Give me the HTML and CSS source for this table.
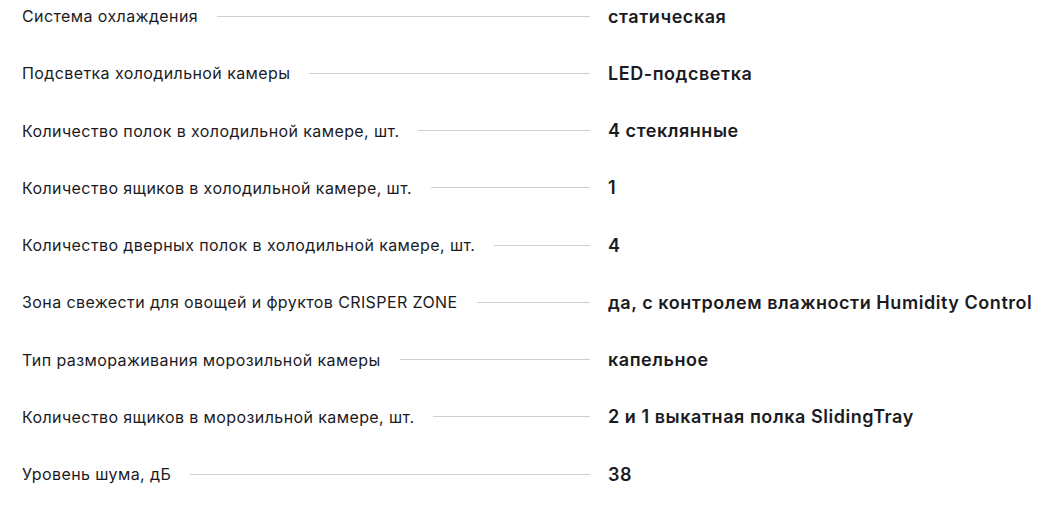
FILE: index.html
```html
<!DOCTYPE html>
<html lang="ru">
<head>
<meta charset="utf-8">
<link rel="stylesheet" href="styles.css">
</head>
<body>
<div class="specs">
  <div class="row"><div class="name"><span class="label">Система охлаждения</span><span class="line"></span></div><div class="value">статическая</div></div>
  <div class="row"><div class="name"><span class="label">Подсветка холодильной камеры</span><span class="line"></span></div><div class="value">LED-подсветка</div></div>
  <div class="row"><div class="name"><span class="label">Количество полок в холодильной камере, шт.</span><span class="line"></span></div><div class="value">4 стеклянные</div></div>
  <div class="row"><div class="name"><span class="label">Количество ящиков в холодильной камере, шт.</span><span class="line"></span></div><div class="value">1</div></div>
  <div class="row"><div class="name"><span class="label">Количество дверных полок в холодильной камере, шт.</span><span class="line"></span></div><div class="value">4</div></div>
  <div class="row"><div class="name"><span class="label">Зона свежести для овощей и фруктов CRISPER ZONE</span><span class="line"></span></div><div class="value">да, с контролем влажности Humidity Control</div></div>
  <div class="row"><div class="name"><span class="label">Тип размораживания морозильной камеры</span><span class="line"></span></div><div class="value">капельное</div></div>
  <div class="row"><div class="name"><span class="label">Количество ящиков в морозильной камере, шт.</span><span class="line"></span></div><div class="value">2 и 1 выкатная полка SlidingTray</div></div>
  <div class="row"><div class="name"><span class="label">Уровень шума, дБ</span><span class="line"></span></div><div class="value">38</div></div>
</div>
</body>
</html>
```
FILE: styles.css
```css
html, body {
  margin: 0;
  padding: 0;
  background: #ffffff;
}
body {
  font-family: Inter, "Noto Sans", sans-serif;
  color: #1b1b1f;
}
.specs {
  padding: 4px 0 0 22px;
  display: flex;
  flex-direction: column;
  gap: 33.25px;
}
.row {
  display: flex;
  align-items: center;
  height: 24px;
  gap: 18px;
}
.name {
  width: 568px;
  display: flex;
  align-items: center;
  gap: 19px;
}
.label {
  font-size: 16px;
  letter-spacing: 0.4px;
  white-space: nowrap;
}
.line {
  flex: 1;
  height: 1px;
  background: #cfcfcf;
}
.value {
  font-size: 18px;
  font-weight: 600;
  letter-spacing: 0.55px;
  white-space: nowrap;
}
```
